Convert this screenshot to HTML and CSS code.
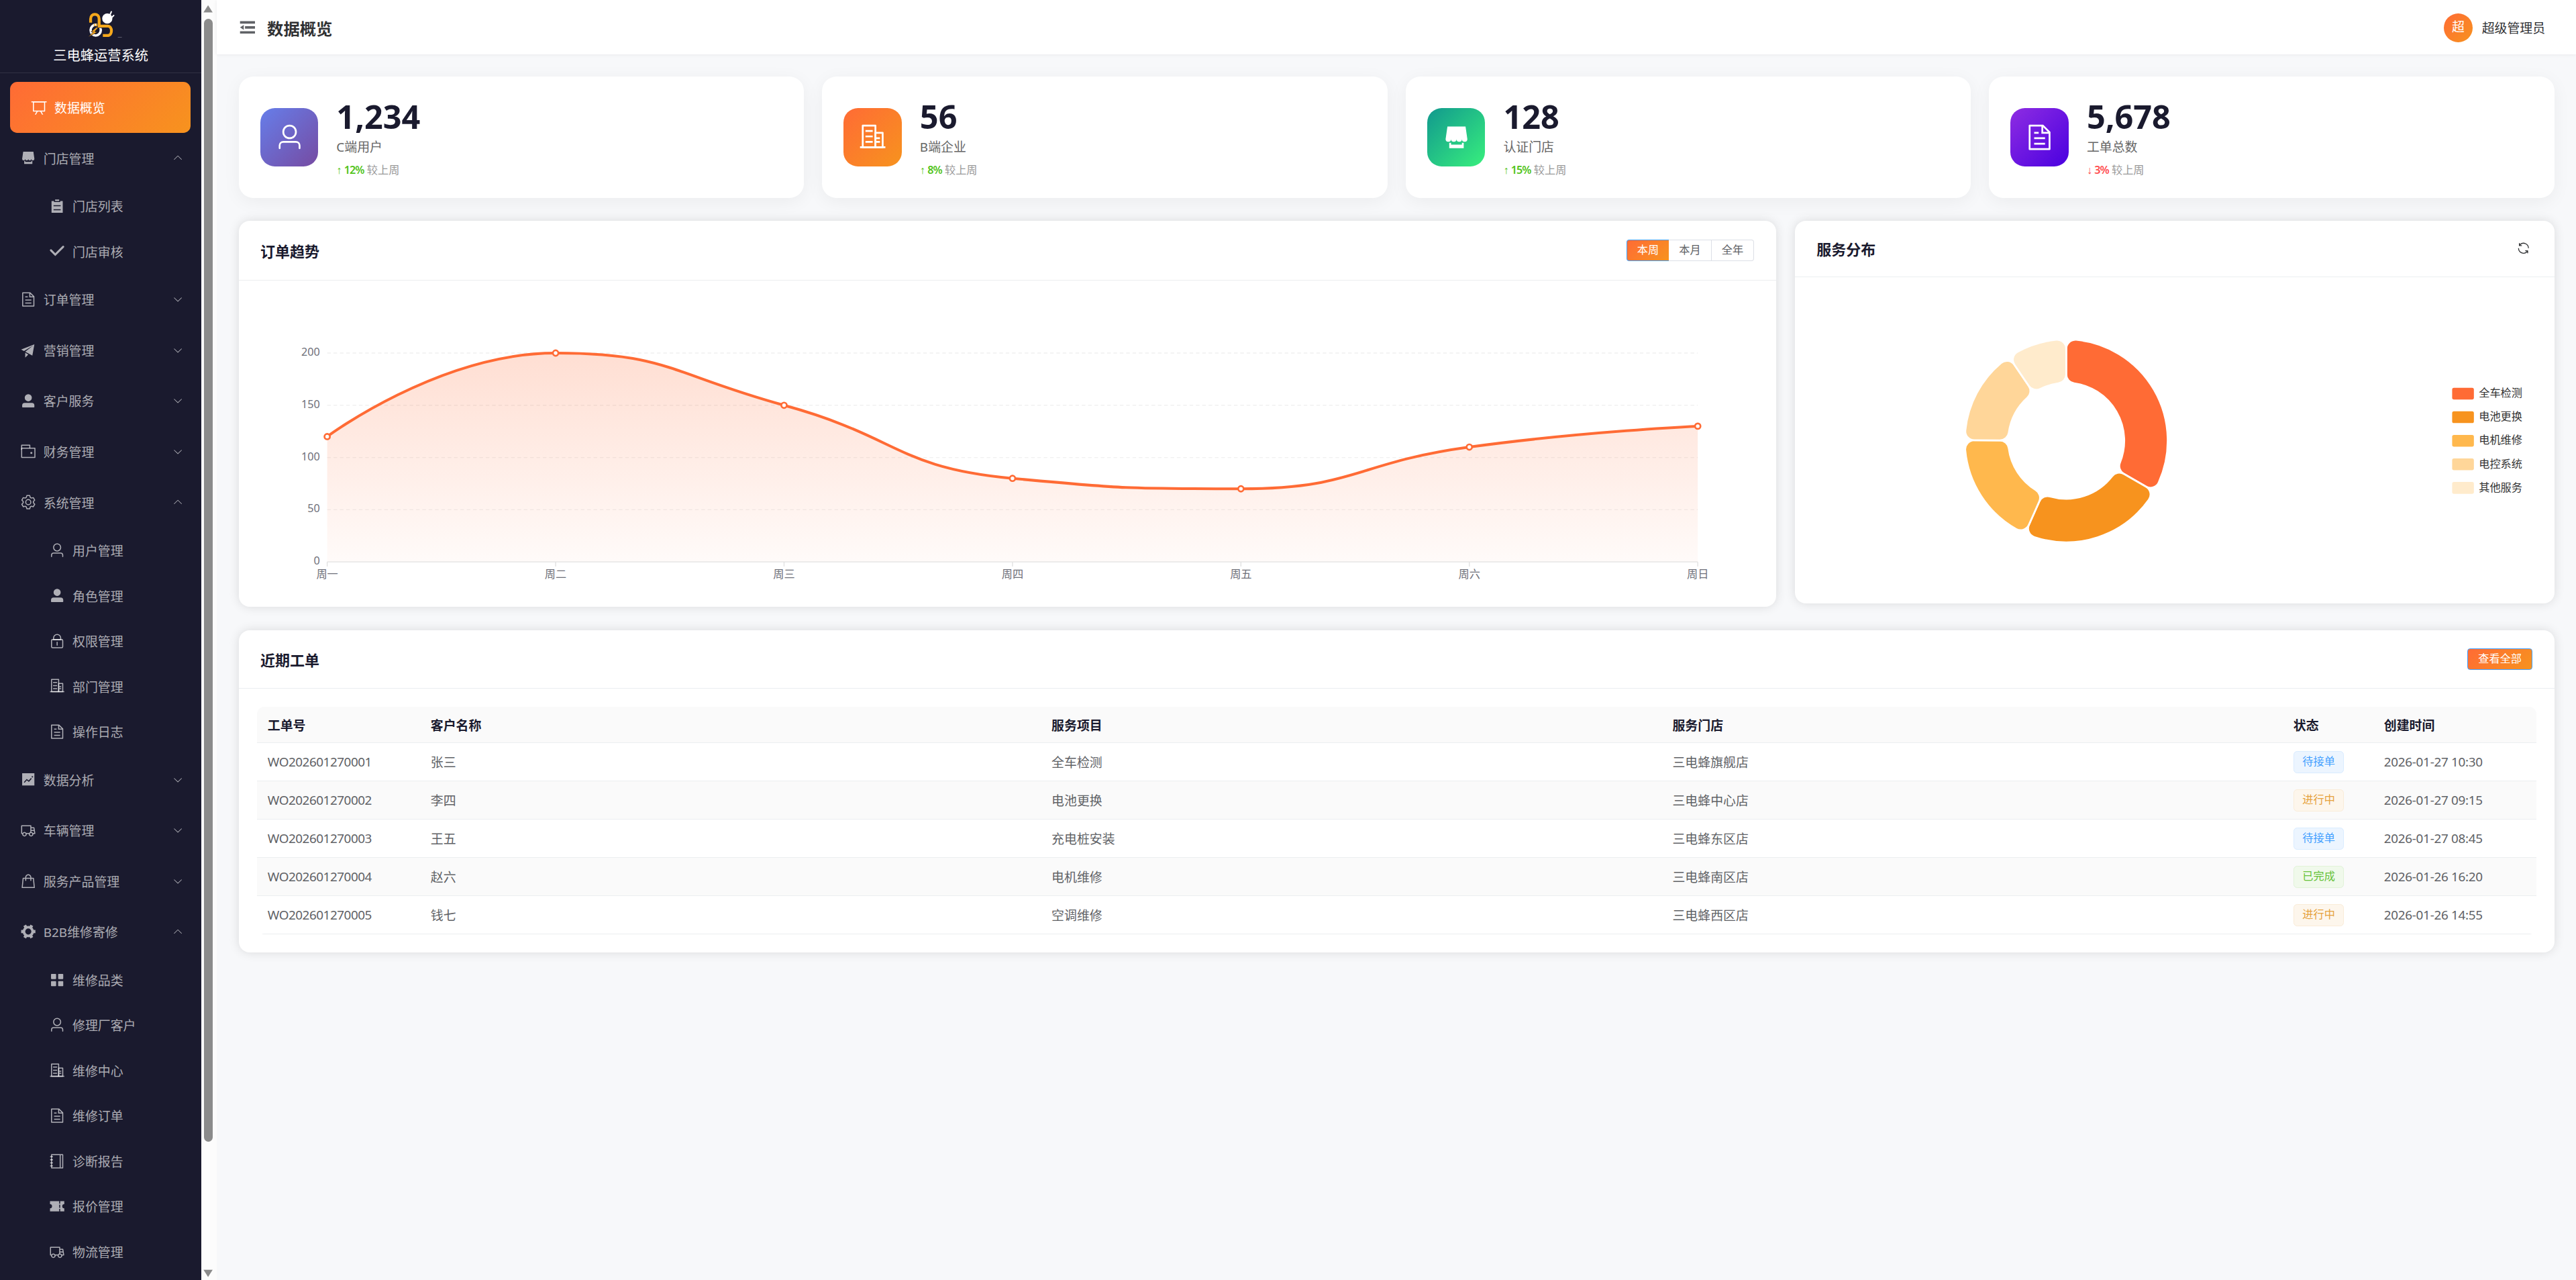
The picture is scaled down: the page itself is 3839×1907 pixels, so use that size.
FILE: index.html
```html
<!DOCTYPE html>
<html lang="zh-CN">
<head>
    <meta charset="UTF-8">
    <meta name="viewport" content="width=device-width, initial-scale=1.0">
    <title>三电蜂运营系统</title>
    <link rel="stylesheet" href="styles.css">
</head>
<body>
    <!-- 图标 -->
    <svg class="sprite" xmlns="http://www.w3.org/2000/svg">
        <symbol id="i-board" viewBox="0 0 1024 1024"><path d="M32 128h960v64H32z"/><path d="M192 192v512h640V192zm-64-64h768v608a32 32 0 0 1-32 32H160a32 32 0 0 1-32-32z"/><path d="M322.176 960H248.32l144.64-250.56 55.424 32zm453.888 0h-73.856L576 741.44l55.424-32z"/></symbol>
        <symbol id="i-shop" viewBox="0 0 1024 1024"><path d="M704 704h64v192H256V704h64v64h384zm188.544-152.192C894.528 559.616 896 567.616 896 576a96 96 0 1 1-192 0 96 96 0 1 1-192 0 96 96 0 1 1-192 0 96 96 0 1 1-192 0c0-8.384 1.408-16.384 3.392-24.192L192 128h640z"/></symbol>
        <symbol id="i-list" viewBox="0 0 1024 1024"><path d="M704 192h160v736H160V192h160v64h384zM288 512h448v-64H288zm0 256h448v-64H288zm96-576V96h256v96z"/></symbol>
        <symbol id="i-check" viewBox="0 0 1024 1024"><path d="M77.248 415.04a64 64 0 0 1 90.496 0l226.304 226.304L846.528 188.8a64 64 0 1 1 90.56 90.496l-543.04 543.04-316.8-316.8a64 64 0 0 1 0-90.496z"/></symbol>
        <symbol id="i-document" viewBox="0 0 1024 1024"><path d="M832 384H576V128H192v768h640zm-26.496-64L640 154.496V320zM160 64h480l256 256v608a32 32 0 0 1-32 32H160a32 32 0 0 1-32-32V96a32 32 0 0 1 32-32m160 448h384v64H320zm0-192h160v64H320zm0 384h384v64H320z"/></symbol>
        <symbol id="i-promotion" viewBox="0 0 1024 1024"><path d="m64 448 832-320-128 704-446.08-243.328L832 192 242.816 545.472zm256 512V657.024L512 768z"/></symbol>
        <symbol id="i-avatar" viewBox="0 0 1024 1024"><path d="M288 320a224 224 0 1 0 448 0 224 224 0 1 0-448 0m544 608H160a32 32 0 0 1-32-32v-96a160 160 0 0 1 160-160h448a160 160 0 0 1 160 160v96a32 32 0 0 1-32 32z"/></symbol>
        <symbol id="i-wallet" viewBox="0 0 1024 1024"><path d="M640 288h-64V128H128v248.384l-64 .384V96a32 32 0 0 1 32-32h512a32 32 0 0 1 32 32z"/><path d="M128 320v512h768V320zm-32-64h832a32 32 0 0 1 32 32v576a32 32 0 0 1-32 32H96a32 32 0 0 1-32-32V288a32 32 0 0 1 32-32"/><path d="M704 640a64 64 0 1 1 0-128 64 64 0 0 1 0 128"/></symbol>
        <symbol id="i-setting" viewBox="0 0 1024 1024"><path d="M600.704 64a32 32 0 0 1 30.464 22.208l35.2 109.376c14.784 7.232 28.928 15.36 42.432 24.512l112.384-24.192a32 32 0 0 1 34.432 15.36L944.32 364.8a32 32 0 0 1-4.032 37.504l-77.12 85.12a357.12 357.12 0 0 1 0 49.024l77.12 85.248a32 32 0 0 1 4.032 37.504l-88.704 153.6a32 32 0 0 1-34.432 15.296L708.8 803.904c-13.44 9.088-27.648 17.28-42.368 24.512l-35.264 109.376A32 32 0 0 1 600.704 960H423.296a32 32 0 0 1-30.464-22.208L357.696 828.48a351.616 351.616 0 0 1-42.56-24.64l-112.32 24.256a32 32 0 0 1-34.432-15.36L79.68 659.2a32 32 0 0 1 4.032-37.504l77.12-85.248a357.12 357.12 0 0 1 0-48.896l-77.12-85.248A32 32 0 0 1 79.68 364.8l88.704-153.6a32 32 0 0 1 34.432-15.296l112.32 24.256c13.568-9.152 27.776-17.408 42.56-24.64l35.2-109.312A32 32 0 0 1 423.232 64H600.64zm-23.424 64H446.72l-36.352 113.088-24.512 11.968a294.113 294.113 0 0 0-34.816 20.096l-22.656 15.36-116.224-25.088-65.28 113.152 79.68 88.192-1.92 27.136a293.12 293.12 0 0 0 0 40.192l1.92 27.136-79.808 88.192 65.344 113.152 116.224-25.024 22.656 15.296a294.113 294.113 0 0 0 34.816 20.096l24.512 11.968L446.72 896h130.688l36.48-113.152 24.448-11.904a288.282 288.282 0 0 0 34.752-20.096l22.592-15.296 116.288 25.024 65.28-113.152-79.744-88.192 1.92-27.136a293.12 293.12 0 0 0 0-40.256l-1.92-27.136 79.808-88.128-65.344-113.152-116.288 24.96-22.592-15.232a287.616 287.616 0 0 0-34.752-20.096l-24.448-11.904L577.344 128zM512 320a192 192 0 1 1 0 384 192 192 0 0 1 0-384m0 64a128 128 0 1 0 0 256 128 128 0 0 0 0-256"/></symbol>
        <symbol id="i-user" viewBox="0 0 1024 1024"><path d="M512 512a192 192 0 1 0 0-384 192 192 0 0 0 0 384m0 64a256 256 0 1 1 0-512 256 256 0 0 1 0 512m320 320v-96a96 96 0 0 0-96-96H288a96 96 0 0 0-96 96v96a32 32 0 1 1-64 0v-96a160 160 0 0 1 160-160h448a160 160 0 0 1 160 160v96a32 32 0 1 1-64 0"/></symbol>
        <symbol id="i-lock" viewBox="0 0 1024 1024"><path d="M224 448a32 32 0 0 0-32 32v384a32 32 0 0 0 32 32h576a32 32 0 0 0 32-32V480a32 32 0 0 0-32-32zm0-64h576a96 96 0 0 1 96 96v384a96 96 0 0 1-96 96H224a96 96 0 0 1-96-96V480a96 96 0 0 1 96-96"/><path d="M512 544a32 32 0 0 1 32 32v192a32 32 0 1 1-64 0V576a32 32 0 0 1 32-32m192-160v-64a192 192 0 1 0-384 0v64zM512 64a256 256 0 0 1 256 256v128H256V320A256 256 0 0 1 512 64"/></symbol>
        <symbol id="i-office" viewBox="0 0 1024 1024"><path d="M192 128v704h384V128zm-32-64h448a32 32 0 0 1 32 32v768a32 32 0 0 1-32 32H160a32 32 0 0 1-32-32V96a32 32 0 0 1 32-32"/><path d="M256 256h256v64H256zm0 192h256v64H256zm0 192h256v64H256zm384-128h128v64H640zm0 128h128v64H640zM64 832h896v64H64z"/><path d="M640 384v448h192V384zm-32-64h256a32 32 0 0 1 32 32v512a32 32 0 0 1-32 32H608a32 32 0 0 1-32-32V352a32 32 0 0 1 32-32"/></symbol>
        <symbol id="i-trend" viewBox="0 0 1024 1024"><path d="M128 896V128h768v768zm291.712-327.296 128 102.4 180.16-201.792-47.744-42.624-139.84 156.608-128-102.4-180.16 201.792 47.744 42.624 139.84-156.608zM816 352a48 48 0 1 0-96 0 48 48 0 0 0 96 0z"/></symbol>
        <symbol id="i-van" viewBox="0 0 1024 1024"><path d="M128.896 736H96a32 32 0 0 1-32-32V224a32 32 0 0 1 32-32h576a32 32 0 0 1 32 32v96h164.544a32 32 0 0 1 31.616 27.136l54.144 352A32 32 0 0 1 922.688 736h-91.52a144 144 0 1 1-286.272 0H415.104a144 144 0 1 1-286.272 0zm23.36-64a143.872 143.872 0 0 1 239.488 0H568.32c17.088-25.6 42.24-45.376 71.744-55.808V256H128v416zm655.488 0h77.632l-19.648-128H704v64.896A144 144 0 0 1 807.744 672m48.128-192-14.72-96H704v96zM688 832a80 80 0 1 0 0-160 80 80 0 0 0 0 160m-416 0a80 80 0 1 0 0-160 80 80 0 0 0 0 160"/></symbol>
        <symbol id="i-goods" viewBox="0 0 1024 1024"><path d="M320 288v-22.336C320 154.688 405.504 64 512 64s192 90.688 192 201.664v22.4h131.072a32 32 0 0 1 31.808 28.8l57.6 576a32 32 0 0 1-31.808 35.2H131.328a32 32 0 0 1-31.808-35.2l57.6-576a32 32 0 0 1 31.808-28.8H320zm64 0h256v-22.336C640 189.248 582.272 128 512 128s-128 61.248-128 137.664v22.4zm-64 64H217.92l-51.2 512h690.56l-51.264-512H704v96a32 32 0 1 1-64 0v-96H384v96a32 32 0 0 1-64 0z"/></symbol>
        <symbol id="i-tools" viewBox="0 0 1024 1024"><path d="M764.416 254.72a351.68 351.68 0 0 1 86.336 149.184H960v192.064H850.752a351.68 351.68 0 0 1-86.336 149.312l54.72 94.72-166.272 96-54.592-94.72a352.64 352.64 0 0 1-172.48 0L371.136 936l-166.272-96 54.72-94.72a351.68 351.68 0 0 1-86.336-149.312H64v-192h109.248a351.68 351.68 0 0 1 86.336-149.312L204.8 160l166.208-96h.192l54.656 94.592a352.64 352.64 0 0 1 172.48 0L652.8 64h.128L819.2 160l-54.72 94.72zM704 499.968a192 192 0 1 0-384 0 192 192 0 0 0 384 0"/></symbol>
        <symbol id="i-menu" viewBox="0 0 1024 1024"><path d="M160 448a32 32 0 0 1-32-32V160a32 32 0 0 1 32-32h256a32 32 0 0 1 32 32v256a32 32 0 0 1-32 32zm448 0a32 32 0 0 1-32-32V160a32 32 0 0 1 32-32h256a32 32 0 0 1 32 32v256a32 32 0 0 1-32 32zM160 896a32 32 0 0 1-32-32V608a32 32 0 0 1 32-32h256a32 32 0 0 1 32 32v256a32 32 0 0 1-32 32zm448 0a32 32 0 0 1-32-32V608a32 32 0 0 1 32-32h256a32 32 0 0 1 32 32v256a32 32 0 0 1-32 32z"/></symbol>
        <symbol id="i-notebook" viewBox="0 0 1024 1024"><path d="M192 128v768h640V128zm-32-64h704a32 32 0 0 1 32 32v832a32 32 0 0 1-32 32H160a32 32 0 0 1-32-32V96a32 32 0 0 1 32-32"/><path d="M672 128h64v768h-64zM96 192h128a32 32 0 0 1 0 64H96a32 32 0 0 1 0-64m0 192h128a32 32 0 0 1 0 64H96a32 32 0 0 1 0-64m0 192h128a32 32 0 0 1 0 64H96a32 32 0 0 1 0-64m0 192h128a32 32 0 0 1 0 64H96a32 32 0 0 1 0-64"/></symbol>
        <symbol id="i-ticket" viewBox="0 0 1024 1024"><path d="M640 832H64V640a128 128 0 1 0 0-256V192h576v160h64V192h256v192a128 128 0 1 0 0 256v192H704V672h-64zm0-416v192h64V416z"/></symbol>
        <symbol id="i-refresh" viewBox="0 0 1024 1024"><path d="M771.776 794.88A384 384 0 0 1 128 512h64a320 320 0 0 0 555.712 216.448H654.72a32 32 0 1 1 0-64h149.056a32 32 0 0 1 32 32v148.928a32 32 0 1 1-64 0v-50.56zM276.288 295.616h92.992a32 32 0 0 1 0 64H220.16a32 32 0 0 1-32-32V178.56a32 32 0 0 1 64 0v50.56A384 384 0 0 1 896.128 512h-64a320 320 0 0 0-555.776-216.384z"/></symbol>
        <symbol id="i-fold" viewBox="0 0 1024 1024"><path d="M896 192H128v128h768zm0 256H384v128h512zm0 256H128v128h768zM320 384 128 512l192 128z"/></symbol>
        <symbol id="i-down" viewBox="0 0 1024 1024"><path d="M831.872 340.864 512 652.672 192.128 340.864a30.592 30.592 0 0 0-42.752 0 29.12 29.12 0 0 0 0 41.6L489.664 714.24a32 32 0 0 0 44.672 0l340.288-331.712a29.12 29.12 0 0 0 0-41.728 30.592 30.592 0 0 0-42.752 0z"/></symbol>
    </svg>

    <div class="layout">
        <aside class="sidebar">
            <div class="sidebar-inner">
                <div class="logo">
                    <svg class="logo-img" viewBox="0 0 40 40">
                        <circle cx="29.500" cy="11.500" r="7.500" fill="#fff"/>
                        <path d="M33.500 6l2-4.500M36.500 9.500l2.500-2.500" stroke="#fff" stroke-width="2" stroke-linecap="round"/>
                        <ellipse cx="12.500" cy="28.500" rx="7.500" ry="8" fill="none" stroke="#fff" stroke-width="3.600"/>
                        <path d="M5 17.500V12C5 3 17.500 3 17.500 12V22.500H30C37.500 22.500 37.500 36.500 30 36.500H23" fill="none" stroke="#1a1a2e" stroke-width="6"/>
                        <path d="M5 17.500V12C5 3 17.500 3 17.500 12V22.500H30C37.500 22.500 37.500 36.500 30 36.500H23" fill="none" stroke="#f5a81c" stroke-width="4.200"/>
                        <path d="M10.500 19v4M13.500 19v4" stroke="#f5a81c" stroke-width="1.500"/>
                        <path d="M13.500 24.500L5.500 31H9L1.500 38.500L14.500 31.500L11 30.500L16 25z" fill="#f5a81c" stroke="#1a1a2e" stroke-width=".6"/>
                        <path d="M45 39h6" stroke="#5a5a6c"/>
                    </svg>
                    <span class="logo-text">三电蜂运营系统</span>
                </div>
                <nav class="menu">
                    <a class="menu-item active"><svg class="icon"><use href="#i-board"/></svg>数据概览</a>
                    <a class="menu-item"><svg class="icon"><use href="#i-shop"/></svg>门店管理<svg class="arrow open"><use href="#i-down"/></svg></a>
                    <a class="menu-item sub"><svg class="icon"><use href="#i-list"/></svg>门店列表</a>
                    <a class="menu-item sub"><svg class="icon"><use href="#i-check"/></svg>门店审核</a>
                    <a class="menu-item"><svg class="icon"><use href="#i-document"/></svg>订单管理<svg class="arrow"><use href="#i-down"/></svg></a>
                    <a class="menu-item"><svg class="icon"><use href="#i-promotion"/></svg>营销管理<svg class="arrow"><use href="#i-down"/></svg></a>
                    <a class="menu-item"><svg class="icon"><use href="#i-avatar"/></svg>客户服务<svg class="arrow"><use href="#i-down"/></svg></a>
                    <a class="menu-item"><svg class="icon"><use href="#i-wallet"/></svg>财务管理<svg class="arrow"><use href="#i-down"/></svg></a>
                    <a class="menu-item"><svg class="icon"><use href="#i-setting"/></svg>系统管理<svg class="arrow open"><use href="#i-down"/></svg></a>
                    <a class="menu-item sub"><svg class="icon"><use href="#i-user"/></svg>用户管理</a>
                    <a class="menu-item sub"><svg class="icon"><use href="#i-avatar"/></svg>角色管理</a>
                    <a class="menu-item sub"><svg class="icon"><use href="#i-lock"/></svg>权限管理</a>
                    <a class="menu-item sub"><svg class="icon"><use href="#i-office"/></svg>部门管理</a>
                    <a class="menu-item sub"><svg class="icon"><use href="#i-document"/></svg>操作日志</a>
                    <a class="menu-item"><svg class="icon"><use href="#i-trend"/></svg>数据分析<svg class="arrow"><use href="#i-down"/></svg></a>
                    <a class="menu-item"><svg class="icon"><use href="#i-van"/></svg>车辆管理<svg class="arrow"><use href="#i-down"/></svg></a>
                    <a class="menu-item"><svg class="icon"><use href="#i-goods"/></svg>服务产品管理<svg class="arrow"><use href="#i-down"/></svg></a>
                    <a class="menu-item"><svg class="icon"><use href="#i-tools"/></svg>B2B维修寄修<svg class="arrow open"><use href="#i-down"/></svg></a>
                    <a class="menu-item sub"><svg class="icon"><use href="#i-menu"/></svg>维修品类</a>
                    <a class="menu-item sub"><svg class="icon"><use href="#i-user"/></svg>修理厂客户</a>
                    <a class="menu-item sub"><svg class="icon"><use href="#i-office"/></svg>维修中心</a>
                    <a class="menu-item sub"><svg class="icon"><use href="#i-document"/></svg>维修订单</a>
                    <a class="menu-item sub"><svg class="icon"><use href="#i-notebook"/></svg>诊断报告</a>
                    <a class="menu-item sub"><svg class="icon"><use href="#i-ticket"/></svg>报价管理</a>
                    <a class="menu-item sub"><svg class="icon"><use href="#i-van"/></svg>物流管理</a>
                </nav>
            </div>
            <div class="scrollbar">
                <svg class="scroll-arrow" viewBox="0 0 10 8"><path d="M5 .5 9.500 7.500H.5z"/></svg>
                <div class="scroll-thumb"></div>
                <svg class="scroll-arrow" viewBox="0 0 10 8"><path d="M5 7.500 .5 .5h9z"/></svg>
            </div>
        </aside>

        <div class="main">
            <header class="header">
                <svg class="fold"><use href="#i-fold"/></svg>
                <h1 class="page-title">数据概览</h1>
                <div class="user">
                    <span class="user-avatar">超</span>
                    <span class="user-name">超级管理员</span>
                </div>
            </header>

            <main class="content">
                <section class="stats">
                    <div class="stat-card">
                        <div class="stat-icon user-bg"><svg><use href="#i-user"/></svg></div>
                        <div class="stat-info">
                            <div class="stat-value">1,234</div>
                            <div class="stat-label">C端用户</div>
                            <div class="stat-trend"><b class="up"><i>↑</i> 12%</b> 较上周</div>
                        </div>
                    </div>
                    <div class="stat-card">
                        <div class="stat-icon company-bg"><svg><use href="#i-office"/></svg></div>
                        <div class="stat-info">
                            <div class="stat-value">56</div>
                            <div class="stat-label">B端企业</div>
                            <div class="stat-trend"><b class="up"><i>↑</i> 8%</b> 较上周</div>
                        </div>
                    </div>
                    <div class="stat-card">
                        <div class="stat-icon shop-bg"><svg><use href="#i-shop"/></svg></div>
                        <div class="stat-info">
                            <div class="stat-value">128</div>
                            <div class="stat-label">认证门店</div>
                            <div class="stat-trend"><b class="up"><i>↑</i> 15%</b> 较上周</div>
                        </div>
                    </div>
                    <div class="stat-card">
                        <div class="stat-icon order-bg"><svg><use href="#i-document"/></svg></div>
                        <div class="stat-info">
                            <div class="stat-value">5,678</div>
                            <div class="stat-label">工单总数</div>
                            <div class="stat-trend"><b class="down"><i>↓</i> 3%</b> 较上周</div>
                        </div>
                    </div>
                </section>

                <section class="charts">
                    <div class="card">
                        <div class="card-header trend-header">
                            <h2>订单趋势</h2>
                            <div class="radio-group">
                                <span class="radio active">本周</span><span class="radio">本月</span><span class="radio">全年</span>
                            </div>
                        </div>
                        <div class="card-body">
                            <svg class="chart" id="trendChart" viewBox="0 0 1657 320" preserveAspectRatio="xMinYMin meet">
                                <defs>
                                    <linearGradient id="areaFill" x1="0" y1="0" x2="0" y2="1">
                                        <stop offset="0" stop-color="#ff6b35" stop-opacity=".22"/>
                                        <stop offset="1" stop-color="#ff6b35" stop-opacity=".03"/>
                                    </linearGradient>
                                </defs>
                            </svg>
                        </div>
                    </div>
                    <div class="card">
                        <div class="card-header pie-header">
                            <h2>服务分布</h2>
                            <svg class="refresh"><use href="#i-refresh"/></svg>
                        </div>
                        <div class="card-body">
                            <svg class="chart" id="pieChart" viewBox="0 0 798 320" preserveAspectRatio="xMinYMin meet"></svg>
                        </div>
                    </div>
                </section>

                <section class="card orders">
                    <div class="card-header order-header">
                        <h2>近期工单</h2>
                        <button class="btn-primary">查看全部</button>
                    </div>
                    <div class="card-body">
                        <table class="order-table">
                            <colgroup>
                                <col class="col-no"><col><col><col><col class="col-status"><col class="col-time">
                            </colgroup>
                            <thead>
                                <tr><th>工单号</th><th>客户名称</th><th>服务项目</th><th>服务门店</th><th>状态</th><th>创建时间</th></tr>
                            </thead>
                            <tbody>
                                <tr><td class="no">WO202601270001</td><td>张三</td><td>全车检测</td><td>三电蜂旗舰店</td><td><span class="tag tag-primary">待接单</span></td><td class="time">2026-01-27 10:30</td></tr>
                                <tr><td class="no">WO202601270002</td><td>李四</td><td>电池更换</td><td>三电蜂中心店</td><td><span class="tag tag-warning">进行中</span></td><td class="time">2026-01-27 09:15</td></tr>
                                <tr><td class="no">WO202601270003</td><td>王五</td><td>充电桩安装</td><td>三电蜂东区店</td><td><span class="tag tag-primary">待接单</span></td><td class="time">2026-01-27 08:45</td></tr>
                                <tr><td class="no">WO202601270004</td><td>赵六</td><td>电机维修</td><td>三电蜂南区店</td><td><span class="tag tag-success">已完成</span></td><td class="time">2026-01-26 16:20</td></tr>
                                <tr><td class="no">WO202601270005</td><td>钱七</td><td>空调维修</td><td>三电蜂西区店</td><td><span class="tag tag-warning">进行中</span></td><td class="time">2026-01-26 14:55</td></tr>
                            </tbody>
                        </table>
                    </div>
                </section>
            </main>
        </div>
    </div>

    <script src="charts.js"></script>
</body>
</html>
```

FILE: styles.css
```css
* {
    box-sizing: border-box;
    margin: 0;
    padding: 0;
}

html {
    height: 100%;
}

body {
    height: 100%;
    overflow: hidden;
    font-family: "Noto Sans", "Noto Sans CJK SC", sans-serif;
    font-size: 14px;
    color: #303133;
    background: #f7f8fa;
    zoom: 1.35;
}

.sprite {
    display: none;
}

.layout {
    display: flex;
    height: 100%;
}

/* 侧边栏 */
.sidebar {
    display: flex;
    flex: none;
    width: 239.400px;
    height: 100%;
    overflow: hidden;
}

.sidebar-inner {
    width: 222.400px;
    height: 100%;
    overflow: hidden;
    background: #1a1a2e;
}

.logo {
    display: flex;
    flex-direction: column;
    align-items: center;
    height: 81px;
    padding-top: 12px;
    border-bottom: 1px solid rgba(255, 255, 255, 0.1);
}

.logo-img {
    width: 30px;
    height: 30px;
    overflow: visible;
}

.logo-text {
    margin-top: 8.600px;
    line-height: 22px;
    font-size: 15px;
    color: #fff;
}

.menu {
    padding-top: 9.500px;
}

.menu-item {
    display: flex;
    align-items: center;
    height: 56px;
    padding: 0 20px 0 19px;
    color: rgba(255, 255, 255, 0.65);
}

.menu-item.sub {
    height: 50px;
    padding-left: 51px;
}

.menu-item.active {
    margin: 0 12px 0 11.300px;
    padding-left: 19.700px;
    border-radius: 8px;
    color: #fff;
    background: linear-gradient(135deg, #ff6b35, #f7931e);
}

.icon {
    width: 18px;
    height: 18px;
    margin: 0 8px 0 3px;
    fill: currentColor;
}

.arrow {
    width: 12px;
    height: 12px;
    margin-left: auto;
    fill: currentColor;
}

.arrow.open {
    transform: rotate(180deg);
}

.scrollbar {
    display: flex;
    flex-direction: column;
    align-items: center;
    flex: 1;
    padding: 5px 3px 3px 1px;
    background: #fcfcfc;
}

.scroll-arrow {
    flex: none;
    width: 12px;
    height: 9px;
    fill: #8b8b8b;
}

.scroll-thumb {
    width: 10px;
    height: 1239px;
    margin: 7px 0 auto;
    border-radius: 5px;
    background: #8b8b8b;
}

/* 顶部栏 */
.main {
    flex: 1;
    min-width: 0;
}

.header {
    display: flex;
    align-items: center;
    height: 60px;
    padding: 1px 34px 0 22.500px;
    background: #fff;
    box-shadow: 0 1px 4px rgba(0, 21, 41, 0.08);
}

.fold {
    width: 22px;
    height: 22px;
    margin-right: 11px;
    fill: #606266;
}

.page-title {
    font-size: 18px;
    font-weight: 600;
}

.user {
    display: flex;
    align-items: center;
    gap: 10px;
    margin-left: auto;
}

.user-avatar {
    width: 32px;
    height: 32px;
    border-radius: 50%;
    line-height: 31px;
    text-align: center;
    color: #fff;
    background: linear-gradient(135deg, #ff6b35, #f7931e);
}

/* 内容区 */
.content {
    padding: 24.400px 24px;
}

.stats {
    display: grid;
    grid-template-columns: repeat(4, 1fr);
    gap: 20px;
    margin-bottom: 25px;
}

.stat-card {
    display: flex;
    align-items: center;
    gap: 20px;
    height: 134px;
    padding: 24px;
    border-radius: 16px;
    background: #fff;
    box-shadow: 0 4px 20px rgba(0, 0, 0, 0.05);
}

.stat-icon {
    display: flex;
    align-items: center;
    justify-content: center;
    width: 64px;
    height: 64px;
    border-radius: 16px;
}

.stat-icon svg {
    width: 32px;
    height: 32px;
    fill: #fff;
}

.user-bg {
    background: linear-gradient(135deg, #667eea, #764ba2);
}

.company-bg {
    background: linear-gradient(135deg, #ff6b35, #f7931e);
}

.shop-bg {
    background: linear-gradient(135deg, #11998e, #38ef7d);
}

.order-bg {
    background: linear-gradient(135deg, #8e2de2, #4a00e0);
}

.stat-info {
    padding-top: 4px;
}

.stat-value {
    line-height: 36px;
    font-size: 36px;
    font-weight: 700;
    color: #1a1a2e;
}

.stat-label {
    margin-top: 6px;
    line-height: 20px;
    color: #666;
}

.stat-trend {
    margin-top: 7px;
    line-height: 17px;
    font-size: 12px;
    color: #999;
}

.stat-trend b {
    font-weight: 600;
    letter-spacing: -0.7px;
}

.stat-trend i {
    font-family: "Liberation Sans", sans-serif;
    font-style: normal;
    letter-spacing: 0;
}

.up {
    color: #52c41a;
}

.down {
    color: #ff4d4f;
}

.card {
    border-radius: 12px;
    background: #fff;
    box-shadow: 0 0 12px rgba(0, 0, 0, 0.12);
}

.card-header {
    display: flex;
    align-items: center;
    justify-content: space-between;
    padding: 0 24px;
    border-bottom: 1px solid #ebeef0;
}

.card-header h2 {
    font-size: 16.300px;
    font-weight: 600;
    color: #1a1a2e;
}

.card-body {
    padding: 20px;
}

.charts {
    display: grid;
    grid-template-columns: 1697px 1fr;
    align-items: start;
    gap: 21px;
    margin-bottom: 26px;
}

.trend-header {
    height: 66px;
}

.pie-header {
    height: 62.500px;
}

.chart {
    display: block;
    width: 100%;
    height: 320px;
    font-size: 12px;
}

.radio-group {
    display: flex;
    padding-top: 1px;
}

.radio {
    width: 47px;
    height: 24px;
    border: 1px solid #dcdfe6;
    border-left: 0;
    line-height: 22px;
    text-align: center;
    font-size: 12px;
    color: #606266;
}

.radio:last-child {
    border-radius: 0 3px 3px 0;
}

.radio.active {
    border: 1px solid #409eff;
    border-right: 0;
    border-radius: 3px 0 0 3px;
    color: #fff;
    background: linear-gradient(135deg, #ff6b35, #f7931e);
}

.refresh {
    width: 16px;
    height: 16px;
    margin-right: 2px;
    fill: #303133;
}

.btn-primary {
    width: 72px;
    height: 24px;
    border: 1px solid #409eff;
    border-radius: 3px;
    font-family: inherit;
    font-size: 12px;
    line-height: 20px;
    color: #fff;
    background: linear-gradient(135deg, #ff6b35, #f7931e);
}

/* 工单表格 */
.order-header {
    height: 64.500px;
}

.order-table {
    width: 100%;
    table-layout: fixed;
    border-collapse: separate;
    border-spacing: 0;
    border-radius: 8px;
    overflow: hidden;
}

.col-no,
.col-time {
    width: 180px;
}

.col-status {
    width: 100px;
}

.order-table th,
.order-table td {
    height: 42.200px;
    padding: 1px 12px 0;
    border-bottom: 1px solid #ebeef0;
    text-align: left;
    color: #606266;
}

.order-table th {
    height: 40px;
    font-weight: 600;
    color: #1a1a2e;
    background: #fafafa;
}

.order-table tbody tr:nth-child(even) {
    background: #fafafa;
}

.order-table .no {
    letter-spacing: -0.35px;
}

.order-table .time {
    letter-spacing: -0.22px;
}

.tag {
    display: block;
    width: 56px;
    height: 24px;
    border: 1px solid;
    border-radius: 4px;
    line-height: 22px;
    text-align: center;
    font-size: 12px;
}

.tag-primary {
    color: #409eff;
    border-color: #d9ecff;
    background: #ecf5ff;
}

.tag-warning {
    color: #e6a23c;
    border-color: #faecd8;
    background: #fdf6ec;
}

.tag-success {
    color: #67c23a;
    border-color: #e1f3d8;
    background: #f0f9eb;
}

/* 图表 */
.axis-label {
    fill: #6e7079;
}

.grid-line {
    stroke: #f0f0f0;
    stroke-dasharray: 4 3;
}

.axis-line {
    stroke: #e0e0e0;
}

.trend-line {
    fill: none;
    stroke: #ff6b35;
    stroke-width: 3;
}

.trend-dot {
    fill: #fff;
    stroke: #ff6b35;
    stroke-width: 2;
}

.slice {
    stroke: #fff;
    stroke-width: 2;
}

.legend-text {
    fill: #333;
}
```

FILE: charts.js
```js
const NS = 'http://www.w3.org/2000/svg';

const add = (parent, tag, attrs, text) => {
    const el = document.createElementNS(NS, tag);
    Object.keys(attrs).forEach((key) => el.setAttribute(key, attrs[key]));
    if (text !== undefined) el.textContent = text;
    parent.appendChild(el);
};

const clamp = (v, a, b) => Math.max(Math.min(v, Math.max(a, b)), Math.min(a, b));

// 平滑曲线
const smoothPath = (pts) => {
    let d = `M${pts[0][0]} ${pts[0][1]}`;
    let c0 = pts[0];
    for (let i = 1; i < pts.length; i++) {
        const [px, py] = pts[i - 1];
        const [x, y] = pts[i];
        let c1 = [x, y];
        let next = [x, y];
        if (i < pts.length - 1) {
            const [nx, ny] = pts[i + 1];
            const lp = Math.hypot(x - px, y - py);
            const ln = Math.hypot(nx - x, ny - y);
            const k = 0.5 * ln / (lp + ln);
            next = [clamp(x + (nx - px) * k, x, nx), clamp(y + (ny - py) * k, y, ny)];
            c1 = [clamp(x - (next[0] - x) * lp / ln, px, x), clamp(y - (next[1] - y) * lp / ln, py, y)];
            next = [x + (x - c1[0]) * ln / lp, y + (y - c1[1]) * ln / lp];
        }
        d += `C${c0} ${c1} ${x} ${y}`;
        c0 = next;
    }
    return d;
};

// 订单趋势
const trend = document.getElementById('trendChart');
const days = ['周一', '周二', '周三', '周四', '周五', '周六', '周日'];
const orders = [120, 200, 150, 80, 70, 110, 130];
const left = 77.5, right = 1590.5, top0 = 60, bottom = 290.5;
const yOf = (v) => bottom - v / 200 * (bottom - top0);
const points = orders.map((v, i) => [left + i * (right - left) / 6, yOf(v)]);

[0, 50, 100, 150, 200].forEach((v) => {
    if (v) add(trend, 'line', { class: 'grid-line', x1: left, x2: right, y1: yOf(v), y2: yOf(v) });
    add(trend, 'text', { class: 'axis-label', x: left - 8, y: yOf(v) + 3, 'text-anchor': 'end' }, v);
});
const line = smoothPath(points);
add(trend, 'path', { d: `${line}V${bottom}H${left}Z`, fill: 'url(#areaFill)' });
add(trend, 'line', { class: 'axis-line', x1: left, x2: right, y1: bottom, y2: bottom });
add(trend, 'path', { class: 'trend-line', d: line });
points.forEach(([x, y], i) => {
    add(trend, 'line', { class: 'axis-line', x1: x, x2: x, y1: bottom, y2: bottom + 5 });
    add(trend, 'circle', { class: 'trend-dot', cx: x, cy: y, r: 3 });
    add(trend, 'text', { class: 'axis-label', x, y: 308.5, 'text-anchor': 'middle' }, days[i]);
});

// 服务分布
const pie = document.getElementById('pieChart');
const services = [
    { name: '全车检测', value: 1048, color: '#ff6b35' },
    { name: '电池更换', value: 735, color: '#f7931e' },
    { name: '电机维修', value: 580, color: '#ffb84d' },
    { name: '电控系统', value: 484, color: '#ffd699' },
    { name: '其他服务', value: 300, color: '#ffebcc' }
];
const cx = 279.5, cy = 160.5, R = 112, r = 64, cr = 10;
const total = services.reduce((sum, s) => sum + s.value, 0);
const at = (radius, a) => `${cx + radius * Math.sin(a)} ${cy - radius * Math.cos(a)}`;

let a0 = 0;
services.forEach((s, i) => {
    const a1 = a0 + s.value / total * Math.PI * 2;
    // 圆角: 外圈与内圈的切点
    const ao = Math.asin(cr / (R - cr)), lo = Math.sqrt((R - cr) ** 2 - cr ** 2);
    const ai = Math.asin(cr / (r + cr)), li = Math.sqrt((r + cr) ** 2 - cr ** 2);
    const big = a1 - a0 > Math.PI ? 1 : 0;
    const d = `M${at(lo, a0)}A${cr} ${cr} 0 0 1 ${at(R, a0 + ao)}A${R} ${R} 0 ${big} 1 ${at(R, a1 - ao)}`
        + `A${cr} ${cr} 0 0 1 ${at(lo, a1)}L${at(li, a1)}A${cr} ${cr} 0 0 1 ${at(r, a1 - ai)}`
        + `A${r} ${r} 0 ${big} 0 ${at(r, a0 + ai)}A${cr} ${cr} 0 0 1 ${at(li, a0)}Z`;
    add(pie, 'path', { class: 'slice', d, fill: s.color });
    add(pie, 'rect', { x: 705.5, y: 102 + i * 26, width: 24, height: 13, rx: 2, fill: s.color });
    add(pie, 'text', { class: 'legend-text', x: 735, y: 112 + i * 26 }, s.name);
    a0 = a1;
});
```
